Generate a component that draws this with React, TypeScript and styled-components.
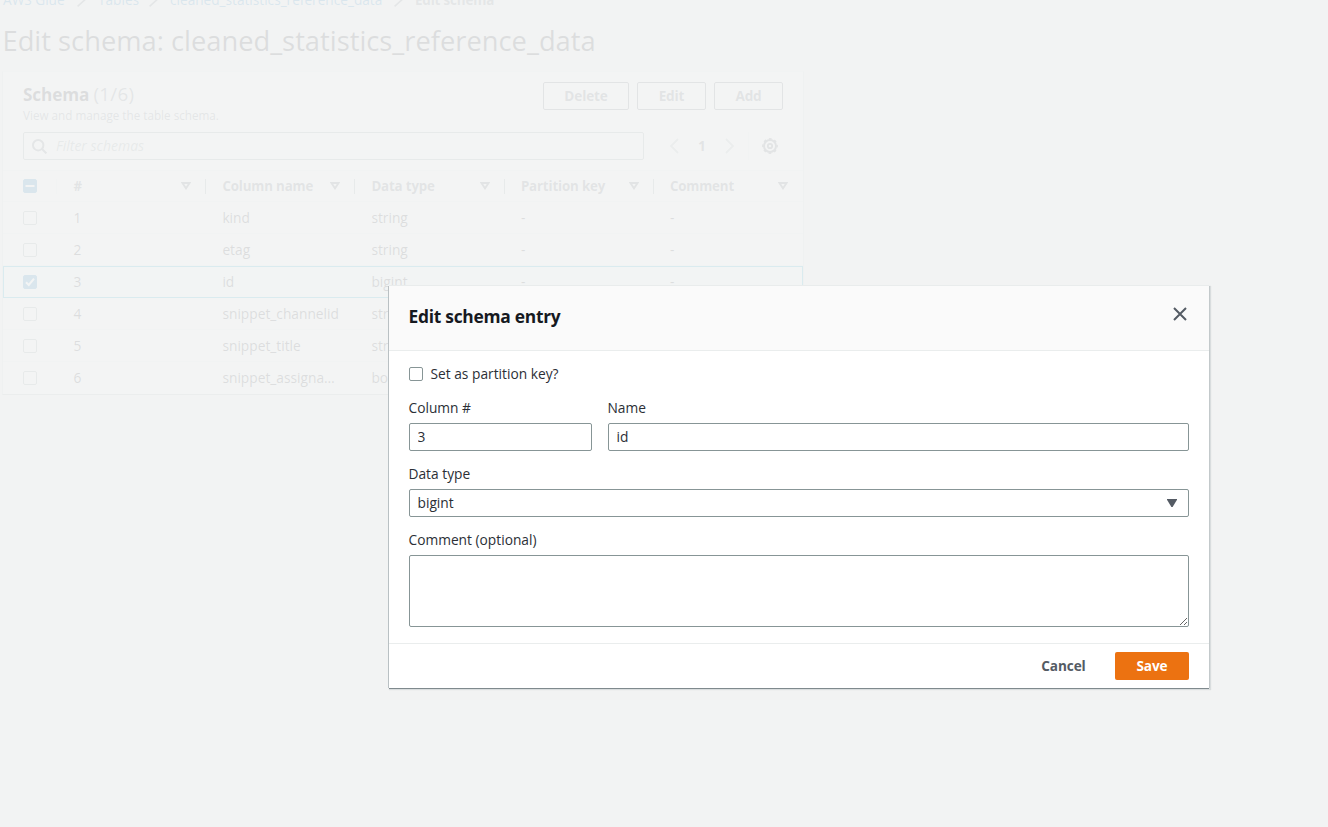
import React from 'react';
import styled, { createGlobalStyle, css } from 'styled-components';

const Global = createGlobalStyle`
  * { box-sizing: border-box; }
  html, body { margin: 0; height: 100%; overflow: hidden; }
  body {
    background: #f2f3f3;
    color: #16191f;
    font-family: 'Open Sans', 'Noto Sans', sans-serif;
    font-size: 13.75px;
    line-height: 22px;
  }
  button, input, textarea { font: inherit; color: inherit; }
`;

const Page = styled.div`
  position: relative;
  height: 827px;
  overflow: hidden;
`;

const Breadcrumbs = styled.nav`
  display: flex;
  align-items: center;
  height: 22px;
  margin: -11px 0 0 3px;
  font-size: 13.65px;
`;

const Crumb = styled.a<{ $width: number; $current?: boolean }>`
  width: ${(p) => p.$width}px;
  white-space: nowrap;
  color: ${(p) => (p.$current ? '#687078' : '#0073bb')};
  ${(p) => p.$current && 'font-weight: 700; font-size: 13.4px; letter-spacing: -0.16px;'}
`;

const Slash = styled.svg`
  width: 10px;
  height: 9px;
  margin: 5px 11px 0;
  flex: none;
  stroke: #687078;
  stroke-width: 1.6;
`;

const Title = styled.h1`
  margin: 12px 0 0 2.5px;
  font-size: 27.3px;
  line-height: 36px;
  font-weight: 400;
`;

const Panel = styled.section`
  width: 802px;
  height: 324px;
  margin: 12px 0 0 2px;
  background: #fff;
  border: 1px solid #d5dbdb;
  border-top-color: #eaeded;
  border-bottom-color: #aab7b8;
`;

const PanelHeader = styled.header`
  display: flex;
  justify-content: space-between;
  align-items: flex-start;
  height: 60px;
  padding: 10px 20px 0;
`;

const PanelTitle = styled.h2`
  margin: 1px 0 0;
  font-size: 17.2px;
  line-height: 22px;
  font-weight: 700;
  letter-spacing: -0.15px;
`;

const Count = styled.span`
  font-size: 18.8px;
  font-weight: 400;
  letter-spacing: 0.3px;
  color: #687078;
`;

const Description = styled.p`
  margin: 0;
  font-size: 11.7px;
  line-height: 18px;
  color: #687078;
`;

const Actions = styled.div`
  display: flex;
  gap: 8px;
`;

const OutlineButton = styled.button<{ $width: number }>`
  width: ${(p) => p.$width}px;
  height: 28px;
  padding: 0;
  border: 1px solid #545b64;
  border-radius: 2px;
  background: #fff;
  color: #545b64;
  font-weight: 700;
  font-size: 13.6px;
  letter-spacing: -0.15px;
  line-height: 26px;
`;

const Tools = styled.div`
  display: flex;
  align-items: center;
  height: 38px;
  padding: 0 0 10px 20px;
`;

const Search = styled.label`
  display: flex;
  flex: none;
  align-items: center;
  width: 621px;
  height: 28px;
  padding-left: 8px;
  border: 1px solid #879596;
  border-radius: 2px;
  color: #687078;
`;

const SearchInput = styled.input`
  flex: 1;
  margin-left: 9px;
  padding: 0;
  border: 0;
  outline: 0;
  background: transparent;
  font-size: 14px;
  &::placeholder {
    color: #879596;
    font-style: italic;
    opacity: 1;
  }
`;

const Pager = styled.div`
  display: flex;
  align-items: center;
  justify-content: space-between;
  width: 64px;
  margin-left: 26px;
  color: #aab7b8;
`;

const PageNumber = styled.span`
  color: #545b64;
  font-weight: 700;
`;

const Settings = styled.div`
  display: flex;
  align-items: center;
  justify-content: center;
  width: 43px;
  height: 28px;
  margin-left: 14px;
  border-left: 1px solid #eaeded;
  color: #545b64;
`;

const rowGrid = css`
  display: grid;
  grid-template-columns: 53px 149px 149px 149.5px 149px 150.5px;
  align-items: center;
`;

const HeadRow = styled.div`
  ${rowGrid}
  height: 32px;
  border-top: 1px solid #eaeded;
  border-bottom: 1px solid #eaeded;
`;

const HeadCell = styled.div`
  display: flex;
  align-items: center;
  justify-content: space-between;
  height: 15px;
  padding: 0 14px 0 16.4px;
  border-left: 1px solid #879596;
  color: #545b64;
  font-size: 13.3px;
  font-weight: 700;
  letter-spacing: -0.15px;
  white-space: nowrap;
  &:nth-child(2) { border-left-color: #eaeded; }
  &:last-child { padding-right: 15px; }
`;

const Row = styled.div<{ $selected?: boolean }>`
  ${rowGrid}
  height: 32px;
  border: 1px solid transparent;
  border-width: 1px 0;
  border-bottom-color: #eaeded;
  &:last-child { border-bottom-color: transparent; }
  ${(p) =>
    p.$selected &&
    css`
      background: #f1faff;
      border: 1px solid #00a1c9;
      & > :first-child { padding-left: 19px; }
      grid-template-columns: 52px 149px 149px 149.5px 149px 149.5px;
    `}
`;

const CheckCell = styled.div`
  display: flex;
  padding-left: 20px;
`;

const Cell = styled.div`
  padding: 0 14px 0 17.4px;
  overflow: hidden;
  white-space: nowrap;
  text-overflow: ellipsis;
`;

const Box = styled.span<{ $on?: boolean }>`
  display: flex;
  flex: none;
  width: 14px;
  height: 14px;
  border: 1px solid ${(p) => (p.$on ? '#0073bb' : '#879596')};
  border-radius: 2px;
  background: ${(p) => (p.$on ? '#0073bb' : '#fff')};
`;

const Overlay = styled.div`
  position: absolute;
  inset: 0;
  background: rgba(242, 243, 243, 0.9);
`;

const Dialog = styled.section`
  position: absolute;
  left: 389px;
  top: 286px;
  width: 820px;
  height: 402px;
  background: #fff;
  box-shadow: 0 -1px 0 #e9ecec, 0 1px 0 #7f898d, -1px 0 0 #b9c0c3, 1px 0 0 #c3c9cb, 1px 1px 1px 1px rgba(0, 28, 36, 0.1);
`;

const DialogHeader = styled.header`
  display: flex;
  align-items: center;
  justify-content: space-between;
  height: 65px;
  padding: 0 22px 4px 19.5px;
  background: #fafafa;
  border-bottom: 1px solid #eaeded;
  color: #545b64;
`;

const DialogTitle = styled.h2`
  margin: 0;
  color: #16191f;
  font-size: 17.4px;
  font-weight: 700;
  letter-spacing: -0.27px;
`;

const CloseIcon = styled.svg`
  width: 14px;
  height: 14px;
  margin-top: -4px;
  stroke: #545b64;
  stroke-width: 2;
`;

const Form = styled.div`
  height: 292px;
  padding: 12px 20px 0;
  color: #2b2f36;
`;

const CheckLabel = styled.label`
  display: flex;
  align-items: center;
  gap: 7.5px;
  height: 22px;
`;

const Fields = styled.div`
  display: grid;
  grid-template-columns: 183px 581px;
  column-gap: 16px;
`;

const Field = styled.label`
  display: block;
  margin-top: 12px;
`;

const Label = styled.span`
  display: block;
  height: 26px;
  margin-left: -0.5px;
`;

const controlStyle = css`
  width: 100%;
  height: 28px;
  padding: 0 7.5px;
  border: 1px solid #879596;
  border-radius: 2px;
  background: #fff;
`;

const Input = styled.input`
  ${controlStyle}
  display: block;
  padding-bottom: 2px;
`;

const SelectBox = styled.div`
  ${controlStyle}
  display: flex;
  align-items: center;
  justify-content: space-between;
  padding-right: 11px;
`;

const TextArea = styled.textarea`
  ${controlStyle}
  display: block;
  height: 72px;
  resize: vertical;
`;

const DialogFooter = styled.footer`
  display: flex;
  align-items: center;
  justify-content: flex-end;
  height: 45px;
  padding: 0 20px;
  border-top: 1px solid #eaeded;
`;

const FooterButton = styled.button<{ $primary?: boolean }>`
  height: 28px;
  width: ${(p) => (p.$primary ? 74 : 103)}px;
  padding: 0;
  border: 0;
  border-radius: 2px;
  background: ${(p) => (p.$primary ? '#ec7211' : 'transparent')};
  color: ${(p) => (p.$primary ? '#fff' : '#545b64')};
  font-weight: 700;
  font-size: 13.6px;
  letter-spacing: -0.1px;
`;

const Separator = () => (
  <Slash viewBox="0 0 10 9" fill="none">
    <path d="M0.6 8.4 9.4 0.4" />
  </Slash>
);

const SortIcon = () => (
  <svg width="10" height="8" viewBox="0 0 10 8" fill="none" stroke="currentColor" strokeWidth="1.9">
    <path d="M1.4 1h7.2L5 6.4z" />
  </svg>
);

const Arrow = ({ flip }: { flip?: boolean }) => (
  <svg width="9" height="16" viewBox="0 0 9 16" fill="none" stroke="currentColor" strokeWidth="1.8">
    <path d={flip ? 'M1 1l7 7-7 7' : 'M8 1L1 8l7 7'} />
  </svg>
);

const Check = () => (
  <svg width="12" height="12" viewBox="0 0 12 12" fill="none" stroke="#fff" strokeWidth="2">
    <path d="M2 6.2 4.8 9 10 2.6" />
  </svg>
);

const Dash = () => (
  <svg width="12" height="12" viewBox="0 0 12 12" stroke="#fff" strokeWidth="2">
    <path d="M1.5 6h9" />
  </svg>
);

const GearIcon = () => (
  <svg width="16" height="16" viewBox="0 0 16 16" fill="none" stroke="currentColor">
    <circle cx="8" cy="8" r="6" strokeWidth="2" />
    <circle cx="8" cy="8" r="7.2" strokeWidth="1.4" strokeDasharray="2.83 2.825" strokeDashoffset="1.4" />
    <circle cx="8" cy="8" r="2.2" strokeWidth="1.8" />
  </svg>
);

const headings = ['#', 'Column name', 'Data type', 'Partition key', 'Comment'];

const rows = [
  ['1', 'kind', 'string'],
  ['2', 'etag', 'string'],
  ['3', 'id', 'bigint'],
  ['4', 'snippet_channelid', 'string'],
  ['5', 'snippet_title', 'string'],
  ['6', 'snippet_assignable', 'boolean'],
];

export default function App() {
  return (
    <Page>
      <Global />
      <Breadcrumbs>
        <Crumb $width={63}>AWS Glue</Crumb>
        <Separator />
        <Crumb $width={40}>Tables</Crumb>
        <Separator />
        <Crumb $width={213}>cleaned_statistics_reference_data</Crumb>
        <Separator />
        <Crumb $width={80} $current>Edit schema</Crumb>
      </Breadcrumbs>
      <Title>Edit schema: cleaned_statistics_reference_data</Title>
      <Panel>
        <PanelHeader>
          <div>
            <PanelTitle>
              Schema <Count>(1/6)</Count>
            </PanelTitle>
            <Description>View and manage the table schema.</Description>
          </div>
          <Actions>
            <OutlineButton $width={86}>Delete</OutlineButton>
            <OutlineButton $width={69}>Edit</OutlineButton>
            <OutlineButton $width={69}>Add</OutlineButton>
          </Actions>
        </PanelHeader>
        <Tools>
          <Search>
            <svg width="15" height="15" viewBox="0 0 15 15" fill="none" stroke="currentColor" strokeWidth="2">
              <circle cx="6.2" cy="6.2" r="5.2" />
              <path d="M10 10l4.4 4.4" />
            </svg>
            <SearchInput placeholder="Filter schemas" />
          </Search>
          <Pager>
            <Arrow />
            <PageNumber>1</PageNumber>
            <Arrow flip />
          </Pager>
          <Settings>
            <GearIcon />
          </Settings>
        </Tools>
        <HeadRow>
          <CheckCell>
            <Box $on>
              <Dash />
            </Box>
          </CheckCell>
          {headings.map((h) => (
            <HeadCell key={h}>
              {h}
              <SortIcon />
            </HeadCell>
          ))}
        </HeadRow>
        {rows.map(([n, name, type]) => (
          <Row key={n} $selected={n === '3'}>
            <CheckCell>
              <Box $on={n === '3'}>{n === '3' && <Check />}</Box>
            </CheckCell>
            <Cell>{n}</Cell>
            <Cell>{name}</Cell>
            <Cell>{type}</Cell>
            <Cell>-</Cell>
            <Cell>-</Cell>
          </Row>
        ))}
      </Panel>
      <Overlay />
      <Dialog>
        <DialogHeader>
          <DialogTitle>Edit schema entry</DialogTitle>
          <CloseIcon viewBox="0 0 14 14">
            <path d="M1 1l12 12M13 1L1 13" />
          </CloseIcon>
        </DialogHeader>
        <Form>
          <CheckLabel>
            <Box />
            Set as partition key?
          </CheckLabel>
          <Fields>
            <Field>
              <Label>Column #</Label>
              <Input defaultValue="3" />
            </Field>
            <Field>
              <Label>Name</Label>
              <Input defaultValue="id" />
            </Field>
          </Fields>
          <Field>
            <Label>Data type</Label>
            <SelectBox>
              bigint
              <svg width="10" height="8" viewBox="0 0 10 8" fill="#545b64">
                <path d="M0 0h10v.8L5.6 8H4.4L0 .8z" />
              </svg>
            </SelectBox>
          </Field>
          <Field>
            <Label>Comment (optional)</Label>
            <TextArea />
          </Field>
        </Form>
        <DialogFooter>
          <FooterButton>Cancel</FooterButton>
          <FooterButton $primary>Save</FooterButton>
        </DialogFooter>
      </Dialog>
    </Page>
  );
}
